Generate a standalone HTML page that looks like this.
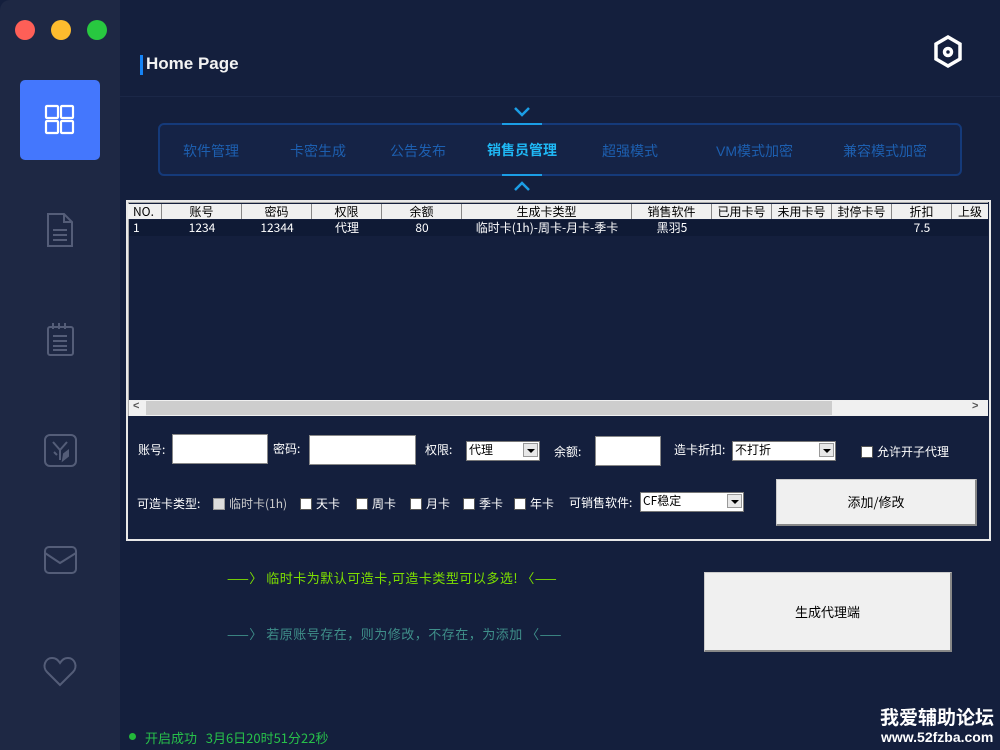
<!DOCTYPE html>
<html><head><meta charset="utf-8"><style>
*{margin:0;padding:0;box-sizing:border-box}
body{width:1000px;height:750px;background:#141f3d;font-family:"Liberation Sans","Noto Sans CJK SC",sans-serif;position:relative;overflow:hidden;color:#fff}
.a{position:absolute}
.side{left:0;top:0;width:120px;height:750px;background:#1e2844;border-radius:10px 0 0 0}
.dot{width:20px;height:20px;border-radius:50%;top:20px}
.simsun{font-family:"WenQuanYi Zen Hei","Noto Sans CJK SC",sans-serif;font-size:12px}
.hd{top:204px;height:15px;background:#f0f0f0;color:#000;font-size:12px;line-height:15px;text-align:center;border-right:1px solid #888;}
.cell{top:220px;height:15px;font-size:12px;line-height:15px;text-align:center;color:#fff}
.inp{background:#fff;border:1px solid #888;}
.lbl{font-size:12px;color:#fff;line-height:14px}
.sel{background:#fff;border:1px solid #777;color:#000;font-size:12px;line-height:16px;padding-left:2px}
.sel i{position:absolute;right:1px;top:1px;width:15px;height:14px;background:#e8e8e8;border:1px solid #999}
.sel i:after{content:"";position:absolute;left:3px;top:5px;border:4px solid transparent;border-top:4px solid #000}
.cb{width:12px;height:12px;background:#fff;border:1px solid #555}
.btn{background:#f0f0f0;color:#000;font-size:13px;text-align:center;border:1px solid #ccc;border-bottom:2px solid #888;border-right:2px solid #888}
.tab{top:141px;font-size:14px;color:#1d5fb0}
</style></head><body>
<div class="a side"></div>
<div class="a dot" style="left:15px;background:#fe5f57"></div>
<div class="a dot" style="left:51px;background:#febc2e"></div>
<div class="a dot" style="left:87px;background:#28c840"></div>
<div class="a" style="left:20px;top:80px;width:80px;height:80px;background:#4477fd;border-radius:5px"></div>
<svg class="a" style="left:44px;top:104px" width="32" height="32" viewBox="0 0 32 32" fill="none" stroke="#fff" stroke-width="2.2"><rect x="2" y="2" width="12" height="12" rx="1"/><rect x="17" y="2" width="12" height="12" rx="1"/><rect x="2" y="17" width="12" height="12" rx="1"/><rect x="17" y="17" width="12" height="12" rx="1"/></svg>
<svg class="a" style="left:40px;top:210px" width="40" height="40" viewBox="0 0 40 40" fill="none" stroke="#545d78" stroke-width="2"><path d="M8 4h16l8 8v24H8z M24 4v8h8 M13 20h14 M13 25h14 M13 30h14"/></svg>
<svg class="a" style="left:40px;top:320px" width="40" height="40" viewBox="0 0 40 40" fill="none" stroke="#545d78" stroke-width="2"><rect x="8" y="7" width="25" height="28" rx="2"/><path d="M13 3v6 M19 3v6 M25 3v6 M13 16h14 M13 21h14 M13 26h14 M13 30h14"/></svg>
<svg class="a" style="left:40px;top:430px" width="40" height="40" viewBox="0 0 40 40" fill="none" stroke="#545d78" stroke-width="2"><rect x="5" y="5" width="31" height="31" rx="5"/><path d="M13 12l7 8 7-8 M20 20v10 M14 22l3 3"/><path d="M23 30l1-6 4-3 0 5z" fill="#545d78"/></svg>
<svg class="a" style="left:40px;top:540px" width="40" height="40" viewBox="0 0 40 40" fill="none" stroke="#545d78" stroke-width="2"><rect x="5" y="7" width="31" height="26" rx="4"/><path d="M5 13l15 10 16-10"/></svg>
<svg class="a" style="left:40px;top:650px" width="40" height="40" viewBox="0 0 40 40" fill="none" stroke="#545d78" stroke-width="2"><path d="M20 35L7 22C2 17 5 8 12 8c4 0 6 2 8 5 2-3 4-5 8-5 7 0 10 9 5 14z"/></svg>

<div class="a" style="left:140px;top:55px;width:3px;height:20px;background:#1683f5"></div>
<div class="a" style="left:146px;top:54px;font-size:17px;font-weight:bold;color:#f3f3f3">Home Page</div>
<div class="a" style="left:120px;top:96px;width:880px;height:1px;background:#1b2747"></div>
<svg class="a" style="left:932px;top:34px" width="32" height="36" viewBox="0 0 32 36" fill="none" stroke="#fff" stroke-width="3.5"><path d="M16 3l12 7v15l-12 7-12-7V10z"/><circle cx="16" cy="18" r="3.5"/></svg>

<div class="a" style="left:158px;top:123px;width:804px;height:53px;border:2px solid #153a7a;border-radius:6px;background:#152346"></div>
<div class="a tab" style="left:183px">软件管理</div>
<div class="a tab" style="left:290px">卡密生成</div>
<div class="a tab" style="left:390px">公告发布</div>
<div class="a tab" style="left:487px;color:#1fb8f5;font-weight:bold;top:140px">销售员管理</div>
<div class="a tab" style="left:602px">超强模式</div>
<div class="a tab" style="left:716px">VM模式加密</div>
<div class="a tab" style="left:843px">兼容模式加密</div>
<div class="a" style="left:502px;top:123px;width:40px;height:2px;background:#1b9ee6"></div>
<div class="a" style="left:502px;top:174px;width:40px;height:2px;background:#1b9ee6"></div>
<svg class="a" style="left:513px;top:106px" width="18" height="12" viewBox="0 0 18 12" fill="none" stroke="#1b9ee6" stroke-width="2.5"><path d="M2 2l7 7 7-7"/></svg>
<svg class="a" style="left:513px;top:180px" width="18" height="12" viewBox="0 0 18 12" fill="none" stroke="#1b9ee6" stroke-width="2.5"><path d="M2 10l7-7 7 7"/></svg>

<div class="a" style="left:126px;top:200px;width:865px;height:341px;border:2px solid #e8e8e8"></div>
<div class="a" style="left:128px;top:202px;width:860px;height:214px;border:1px solid #aaa;border-right:0"></div>
<div class="a simsun" style="left:128px;top:204px;width:860px;height:15px;background:#f0f0f0"></div>
<div class="a hd simsun" style="left:129px;width:33px;text-align:left;padding-left:4px">NO.</div>
<div class="a hd simsun" style="left:162px;width:80px">账号</div>
<div class="a hd simsun" style="left:242px;width:70px">密码</div>
<div class="a hd simsun" style="left:312px;width:70px">权限</div>
<div class="a hd simsun" style="left:382px;width:80px">余额</div>
<div class="a hd simsun" style="left:462px;width:170px">生成卡类型</div>
<div class="a hd simsun" style="left:632px;width:80px">销售软件</div>
<div class="a hd simsun" style="left:712px;width:60px">已用卡号</div>
<div class="a hd simsun" style="left:772px;width:60px">未用卡号</div>
<div class="a hd simsun" style="left:832px;width:60px">封停卡号</div>
<div class="a hd simsun" style="left:892px;width:60px">折扣</div>
<div class="a hd simsun" style="left:952px;width:36px;border-right:0">上级</div>
<div class="a" style="left:129px;top:220px;width:859px;height:16px;background:#0f1a35"></div>
<div class="a cell simsun" style="left:133px">1</div>
<div class="a cell simsun" style="left:162px;width:80px">1234</div>
<div class="a cell simsun" style="left:242px;width:70px">12344</div>
<div class="a cell simsun" style="left:312px;width:70px">代理</div>
<div class="a cell simsun" style="left:382px;width:80px">80</div>
<div class="a cell simsun" style="left:462px;width:170px">临时卡(1h)-周卡-月卡-季卡</div>
<div class="a cell simsun" style="left:632px;width:80px">黑羽5</div>
<div class="a cell simsun" style="left:892px;width:60px">7.5</div>
<div class="a" style="left:129px;top:400px;width:859px;height:16px;background:#f0f0f0"></div>
<div class="a" style="left:146px;top:401px;width:686px;height:14px;background:#cdcdcd"></div>
<div class="a" style="left:133px;top:400px;font-size:11px;color:#555;font-weight:bold">&lt;</div>
<div class="a" style="left:972px;top:400px;font-size:11px;color:#555;font-weight:bold">&gt;</div>

<div class="a lbl simsun" style="left:138px;top:443px">账号:</div>
<div class="a inp" style="left:172px;top:434px;width:96px;height:30px"></div>
<div class="a lbl simsun" style="left:273px;top:442px">密码:</div>
<div class="a inp" style="left:309px;top:435px;width:107px;height:30px"></div>
<div class="a lbl simsun" style="left:425px;top:443px">权限:</div>
<div class="a sel simsun" style="left:466px;top:441px;width:74px;height:20px">代理<i></i></div>
<div class="a lbl simsun" style="left:554px;top:445px">余额:</div>
<div class="a inp" style="left:595px;top:436px;width:66px;height:30px"></div>
<div class="a lbl simsun" style="left:674px;top:443px">造卡折扣:</div>
<div class="a sel simsun" style="left:732px;top:441px;width:104px;height:20px">不打折<i></i></div>
<div class="a cb" style="left:861px;top:446px"></div>
<div class="a lbl simsun" style="left:877px;top:445px">允许开子代理</div>

<div class="a lbl simsun" style="left:137px;top:497px">可造卡类型:</div>
<div class="a cb" style="left:213px;top:498px;background:#ddd;border-color:#999"></div>
<div class="a lbl simsun" style="left:229px;top:497px;color:#ccc">临时卡(1h)</div>
<div class="a cb" style="left:300px;top:498px"></div><div class="a lbl simsun" style="left:316px;top:497px">天卡</div>
<div class="a cb" style="left:356px;top:498px"></div><div class="a lbl simsun" style="left:372px;top:497px">周卡</div>
<div class="a cb" style="left:410px;top:498px"></div><div class="a lbl simsun" style="left:426px;top:497px">月卡</div>
<div class="a cb" style="left:463px;top:498px"></div><div class="a lbl simsun" style="left:479px;top:497px">季卡</div>
<div class="a cb" style="left:514px;top:498px"></div><div class="a lbl simsun" style="left:530px;top:497px">年卡</div>
<div class="a lbl simsun" style="left:569px;top:496px">可销售软件:</div>
<div class="a sel simsun" style="left:640px;top:492px;width:104px;height:20px">CF稳定<i></i></div>
<div class="a btn simsun" style="left:776px;top:479px;width:201px;height:47px;line-height:44px">添加/修改</div>

<div class="a simsun" style="left:227px;top:568px;color:#7ee000;font-size:13px;letter-spacing:0.5px">——〉 临时卡为默认可造卡,可造卡类型可以多选! 〈——</div>
<div class="a simsun" style="left:227px;top:624px;color:#3f8f8a;font-size:13px;letter-spacing:0.5px">——〉 若原账号存在，则为修改，不存在，为添加 〈——</div>
<div class="a btn simsun" style="left:704px;top:572px;width:248px;height:80px;line-height:77px">生成代理端</div>

<div class="a" style="left:129px;top:733px;width:7px;height:7px;border-radius:50%;background:#23b83a"></div>
<div class="a simsun" style="left:145px;top:728px;color:#27c04a;font-size:13px">开启成功 &nbsp; 3月6日20时51分22秒</div>
<div class="a" style="left:880px;top:703px;font-size:19px;font-weight:bold;color:#fff;font-family:'Noto Sans CJK SC',sans-serif">我爱辅助论坛</div>
<div class="a" style="left:881px;top:729px;font-size:14px;font-weight:bold;color:#fff">www.52fzba.com</div>
</body></html>
